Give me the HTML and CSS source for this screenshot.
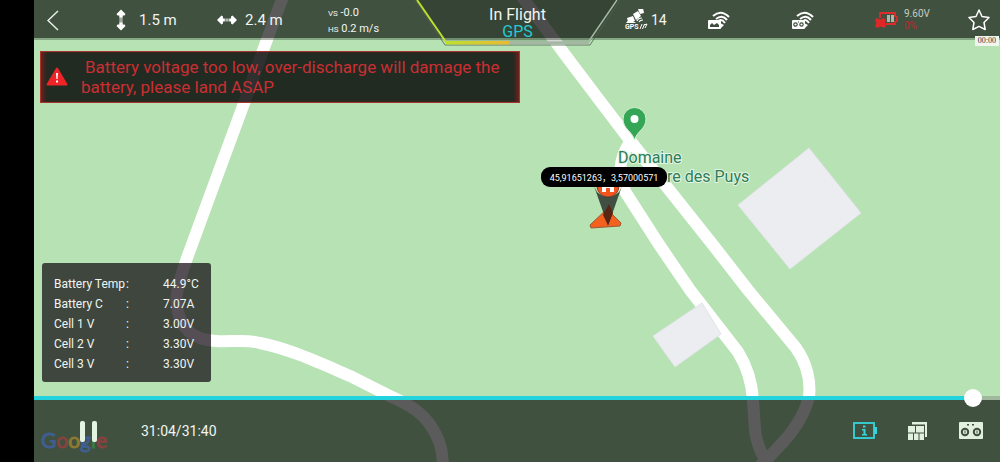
FILE: index.html
```
<!DOCTYPE html>
<html lang="en">
<head>
<meta charset="utf-8">
<title>Flight record playback</title>
<link rel="stylesheet" href="styles.css">
</head>
<body>
<div class="stage">
  <svg class="map" viewBox="34 0 966 462" preserveAspectRatio="xMidYMid slice" role="img" aria-label="Map">
    <rect class="map-ground" x="34" y="0" width="966" height="462"/>
    <g class="map-road">
      <path d="M284 -6 L265 45 L243 106 L212 190 L187 258 C178 284 174 298 178 312 C183 332 196 340 216 341 C232 342 246 339 260 343 C290 349 320 363 350 376 L392 397 C412 406 422 413 431 426 C440 440 443 450 443 470"/>
      <path d="M520 -6 L569 60 L600 101 L632 143 L713 245 L748 290 L796 348 C806 362 811 380 809 397 C802 425 782 444 760 466"/>
      <path d="M630 142 C618 160 618 178 626 193 L658 243 L690 290 L738 352 C748 368 752 385 753 400 L755 430 Q757 446 766 462"/>
    </g>
    <path class="map-building" d="M809 148 L861 213 L790 269 L738 205Z"/>
    <path class="map-building" d="M653 336 L702 303 L721 334 L675 367Z"/>
    <path class="place-pin" d="M634.500 140 C632 131 623 129 623 119 A11.500 11.500 0 0 1 646 119 C646 129 637 131 634.500 140Z"/>
    <circle cx="634.500" cy="119" r="4" fill="#fff"/>
    <text class="place-name" x="618" y="163">Domaine</text>
    <text class="place-name" x="667" y="182">re des Puys</text>
    <path d="M607 209 L590 225 L591 228 L620 226 L621 223Z" fill="#f4601d" stroke="#9a5a35"/>
    <circle cx="608" cy="186" r="11" fill="#f4551f" stroke="#8a3f20"/>
    <path d="M594 186 L597 192 Q608 202 619 192 L622 186 L608 226Z" fill="#343f36" opacity=".9"/>
    <path d="M602 184 H614 V192 H610 V188 H606 V192 H602Z" fill="#fff"/>
    <path d="M609 204 L603 215 L608 225 L613 213Z" fill="#5a2513"/>
    <rect x="541" y="167" width="126" height="20" rx="9"/>
    <text class="coords" x="604" y="181">45,91651263，3,57000571</text>
  </svg>

  <header class="topbar">
    <button class="icon-button back" aria-label="Back"><svg width="12" height="21" viewBox="0 0 12 21"><path d="M11 1 L1 10.500 L11 20" fill="none" stroke="#e9efe8" stroke-width="1.500"/></svg></button>
    <div class="reading">
      <svg width="12" height="22" viewBox="0 0 12 22" fill="#fff"><path d="M6 0.500 L10.500 5 L9.500 6.500 H7.700 V8.800 H4.300 V6.500 H2.500 L1.500 5Z M6 21.500 L10.500 17 L9.500 15.500 H7.700 V13.200 H4.300 V15.500 H2.500 L1.500 17Z M4.300 9.500h3.400v1.100H4.300z M4.300 11.400h3.400v1.100H4.300z"/></svg>
      <span>1.5 m</span>
    </div>
    <div class="reading">
      <svg width="20" height="12" viewBox="0 0 20 12" fill="#fff"><path d="M0 6 L4.500 1.500 L6 2.500 V4.500 H7.800 V7.500 H6 V9.500 L4.500 10.500Z M20 6 L15.500 1.500 L14 2.500 V4.500 H12.200 V7.500 H14 V9.500 L15.500 10.500Z M8.600 4.500h1v3h-1z M10.400 4.500h1v3h-1z"/></svg>
      <span>2.4 m</span>
    </div>
    <div class="speeds">
      <div><small>VS</small> -0.0</div>
      <div><small>HS</small> 0.2 m/s</div>
    </div>
    <div class="mode">
      <svg class="mode-frame" viewBox="0 0 205 48" preserveAspectRatio="none" aria-hidden="true">
        <defs><linearGradient id="charge"><stop offset="0" stop-color="#bde02f"/><stop offset="1" stop-color="#edb832"/></linearGradient></defs>
        <path d="M1 0 L31 43 H174 L204 0Z" fill="#000" fill-opacity=".16"/>
        <path d="M0 0 L30 45 H175 L205 0" fill="none" stroke="#4d5f4d" stroke-opacity=".8"/>
        <path d="M2 0 L31 42" stroke="#bde02f" stroke-width="2"/>
        <path d="M94 42.500 H173 L202 0" fill="none" stroke="#a5b8a4" stroke-width="1.500"/>
        <path d="M94 43 H174" stroke="#a5b8a4" stroke-width="3"/>
        <rect x="31" y="41" width="63" height="3.500" fill="url(#charge)"/>
      </svg>
      <div class="mode-name">In Flight</div>
      <div class="mode-source">GPS</div>
    </div>
    <div class="satellites">
      <svg width="23" height="22" viewBox="0 0 23 22">
        <g fill="#fff"><path d="M8 5 L13 2 L16 7 L11 11Z"/><path d="M13 0 L18 -1 L19 4 L15 5Z"/><path d="M2 9 L8 7 L10 12 L3 13Z"/><path d="M1 14 Q3 10 8 12 L11 14Z"/></g>
        <path d="M12 12 Q13 9 17 9 M14 13 Q15 11 18 11" fill="none" stroke="#fff" stroke-width="1.200"/>
        <text class="sat-label" x="0" y="20">GPS</text>
        <path d="M15 20 L17 15 M17.500 20 L19.500 15 M19 16 L22 15 L20 19" fill="none" stroke="#fff"/>
      </svg>
      <span>14</span>
    </div>
    <div class="signal">
      <svg width="22" height="19" viewBox="0 0 22 19"><g fill="none" stroke="#fff" stroke-width="2"><path d="M5 5 Q13 -2 21 6 M8 8 Q14 3 19 9 M11 9.500 Q14 8 17 12"/></g><path d="M13 12.500 L16 14 L13 17Z" fill="#fff"/><rect y="9" width="13" height="9" rx="1" fill="#fff"/><path d="M2 16 V14 L4 12 L6 14 L9 12 L11 14 V16Z" fill="#3f4e3f"/></svg>
    </div>
    <div class="signal">
      <svg width="22" height="19" viewBox="0 0 22 19"><g fill="none" stroke="#fff" stroke-width="2"><path d="M5 5 Q13 -2 21 6 M8 8 Q14 3 19 9 M12 9.500 Q14 8 17 12"/></g><path d="M13 12.500 L16 14 L13 17Z" fill="#fff"/><rect y="9" width="13" height="9" rx="1" fill="#fff"/><g fill="none" stroke="#3f4e3f" stroke-width="1.200"><circle cx="3.500" cy="13.500" r="1.700"/><circle cx="9.500" cy="13.500" r="1.700"/><path d="M6 11h1"/></g></svg>
    </div>
    <div class="power">
      <svg width="24" height="18" viewBox="0 0 24 18"><path d="M5 7 V2 H20 V5 L22 6 V10 L20 11 V13 H11" fill="none" stroke="#de2b2b" stroke-width="1.800"/><path d="M12 4h3v7h-3z M16 4h3v7h-3z" fill="#aeb6ac"/><path d="M2 7 L5.500 8.500 L9 7 L11 9 L10 12 L11 15 L9 17 L5.500 15.500 L2 17 L0 15 L1.500 12 L0 9Z" fill="#e02626"/></svg>
      <div class="power-values"><div>9.60V</div><div class="power-level">0%</div></div>
    </div>
    <div class="favourite">
      <button class="icon-button" aria-label="Favourite"><svg width="22" height="22" viewBox="0 0 22 22"><path d="M11 1 L14 7.500 L21 8.500 L16 13.500 L17.200 20.500 L11 17.300 L4.800 20.500 L6 13.500 L1 8.500 L8 7.500Z" fill="none" stroke="#fff" stroke-width="1.500" stroke-linejoin="round"/></svg></button>
      <span class="clock">00:00</span>
    </div>
  </header>

  <main class="overlay">
    <div class="alert" role="alert">
      <svg width="22" height="20" viewBox="0 0 22 20"><path d="M11 1.500 L20.500 17.500 H1.500Z" fill="#ee2428" stroke="#ee2428" stroke-width="2" stroke-linejoin="round"/><path d="M10 6h2l-.4 6h-1.200z M10 13.500h2v2h-2z" fill="#fff"/></svg>
      <p>Battery voltage too low, over-discharge will damage the battery, please land ASAP</p>
    </div>
    <table class="battery">
      <tr><th scope="row"><span>Battery Temp</span><span>:</span></th><td>44.9°C</td></tr>
      <tr><th scope="row"><span>Battery C</span><span>:</span></th><td>7.07A</td></tr>
      <tr><th scope="row"><span>Cell 1 V</span><span>:</span></th><td>3.00V</td></tr>
      <tr><th scope="row"><span>Cell 2 V</span><span>:</span></th><td>3.30V</td></tr>
      <tr><th scope="row"><span>Cell 3 V</span><span>:</span></th><td>3.30V</td></tr>
    </table>
  </main>

  <footer class="player">
    <input class="seek" type="range" min="0" max="1900" value="1864" aria-label="Playback position">
    <div class="brand" aria-label="Google"><span class="blue">G</span><span class="red">o</span><span class="yellow">o</span><span class="blue">g</span><span class="green">l</span><span class="red">e</span></div>
    <button class="icon-button pause" aria-label="Pause"><svg width="18" height="21" viewBox="0 0 18 21" fill="#e4f4e2"><rect x="0" width="5" height="21" rx="2"/><rect x="12" width="5" height="21" rx="2"/></svg></button>
    <span class="time">31:04/31:40</span>
    <div class="tools">
      <button class="icon-button" aria-label="Battery information"><svg width="24" height="18" viewBox="0 0 24 18"><rect x="1" y="1" width="20" height="15" fill="none" stroke="#35d5dc" stroke-width="1.800"/><path d="M21 5h3v7h-3z M10 3.500h2.500v2H10z M9 7h3.500v5H14v1.500H9V12h1.500V8.500H9z" fill="#35d5dc"/></svg></button>
      <button class="icon-button" aria-label="Map layout"><svg width="20" height="19" viewBox="0 0 20 19" fill="#e2f1df"><path d="M4 0 H19 V15 H17 V2.500 H4Z M0 4 H7 V10.500 H0Z M8 4 H16 V10.500 H8Z M0 11.500 H5 V18 H0Z M6 11.500 H10.500 V18 H6Z M11.500 11.500 H16 V18 H11.500Z"/></svg></button>
      <button class="icon-button" aria-label="Remote controller"><svg width="24" height="18" viewBox="0 0 24 18"><rect width="24" height="17" rx="1" fill="#e2f1df"/><g fill="#e2f1df" stroke="#3f4e3f" stroke-width="2"><circle cx="6" cy="10" r="3.200"/><circle cx="18" cy="10" r="3.200"/></g><path d="M8 2h2v1.500H8z M13 2h2v1.500h-2z M5.500 8.500h1v3h-1z M17.500 8.500h1v3h-1z" fill="#3f4e3f"/></svg></button>
    </div>
  </footer>
</div>
</body>
</html>
```
FILE: styles.css
```
* { box-sizing: border-box; }

body {
  margin: 0;
  padding-left: 34px;
  background: #000;
  color: #f1f5f0;
  font-family: Roboto, "Noto Sans CJK SC", sans-serif;
}

.stage {
  position: relative;
  display: flex;
  flex-direction: column;
  min-height: 100vh;
  overflow: hidden;
}

.map { position: absolute; inset: 0; width: 100%; height: 100%; }
.map-ground { fill: #b6e2b4; }
.map-road { fill: none; stroke: #fff; stroke-width: 12; }
.map-building { fill: #ecedf0; stroke: #e0e4e6; }
.place-pin { fill: #35a556; stroke: #d5efd3; stroke-width: 1; }
.place-name {
  fill: #2d7d57;
  stroke: #e4f4e2;
  stroke-width: 2;
  paint-order: stroke;
  font-size: 16px;
}
.coords { fill: #fff; font-size: 9px; text-anchor: middle; }

.topbar, .overlay, .player { position: relative; }

.icon-button {
  display: flex;
  padding: 0;
  border: 0;
  background: none;
  cursor: pointer;
}

.topbar {
  display: grid;
  grid-template-columns: 81fr 102fr 111fr 87fr 205fr 88fr 84fr 83fr 93fr 32fr;
  align-items: center;
  height: 40px;
  background: rgba(0, 0, 0, .645);
  background-clip: padding-box;
  border-bottom: 2px solid rgba(60, 80, 60, .4);
}
.back { padding-left: 13px; }
.reading { display: flex; align-items: center; gap: 12px; font-size: 15px; }
.reading + .reading { gap: 8px; }
.speeds { padding-top: 1px; font-size: 11px; line-height: 15px; }
.speeds small { font-size: 8px; }

.mode { position: relative; align-self: start; padding-top: 6px; text-align: center; }
.mode-frame { position: absolute; top: 0; left: 0; width: 100%; height: 48px; }
.mode-name, .mode-source { position: relative; font-size: 16px; line-height: 17px; }
.mode-source { color: #22cbd5; }

.satellites { display: flex; align-items: center; gap: 3px; padding-left: 5px; font-size: 14px; }
.sat-label { fill: #fff; font-size: 7px; font-weight: bold; }
.signal svg { display: block; }
.power { display: flex; gap: 5px; align-items: center; font-size: 10px; line-height: 12px; color: #c5cdc4; }
.power-values { align-self: start; }
.power svg { display: block; }
.power-level { color: #b52c2c; }
.favourite { position: relative; }
.clock {
  position: absolute;
  top: 27px;
  right: 1px;
  padding: 0 3px;
  background: #f1f5f0;
  color: #333;
  font: 8px/10px "Liberation Serif", serif;
}

.overlay {
  flex: 1;
  display: flex;
  flex-direction: column;
  justify-content: space-between;
  align-items: flex-start;
  padding: 11px 6px 18px;
}
.alert {
  display: flex;
  align-items: center;
  gap: 13px;
  max-width: 480px;
  padding: 5px;
  border: 1px solid #a8342f;
  background: rgba(0, 0, 0, .81);
  box-shadow: inset 5px 0 5px -3px #8c1d1d, inset -5px 0 5px -3px #8c1d1d;
  color: #cb2e32;
  font-size: 17px;
  line-height: 20px;
}
.alert svg { flex: none; }
.alert p { margin: 0; text-indent: 4px; }

.battery {
  margin-left: 2px;
  padding: 11px 7px 8px 12px;
  border-radius: 3px;
  border-spacing: 0;
  background: rgba(8, 0, 8, .69);
  font-size: 12px;
  line-height: 20px;
}
.battery th { display: flex; justify-content: space-between; width: 75px; padding: 0; font-weight: normal; }
.battery td { width: 75px; padding: 0 0 0 34px; }

.player {
  display: flex;
  align-items: center;
  height: 62px;
  padding: 0 17px 0 46px;
  background: rgba(0, 0, 0, .645);
}
.seek {
  position: absolute;
  top: -11px;
  left: 0;
  width: 100%;
  height: 18px;
  margin: 0;
  appearance: none;
  background: linear-gradient(90deg, #22d3dd 97%, #a0b89e 97%) center / 100% 4px no-repeat;
}
.seek::-webkit-slider-thumb {
  appearance: none;
  width: 18px;
  height: 18px;
  border-radius: 50%;
  background: #fff;
}
.brand { position: absolute; left: 7px; top: 27px; font: 21px/26px Lato, sans-serif; -webkit-text-stroke: 1px; }
.blue { color: #405e91; }
.red { color: #87423f; }
.yellow { color: #8c7a32; }
.green { color: #3c7a4a; }
.pause { position: relative; }
.time { margin-left: 43px; font-size: 14px; }
.tools { display: flex; gap: 31px; margin-left: auto; }
```
